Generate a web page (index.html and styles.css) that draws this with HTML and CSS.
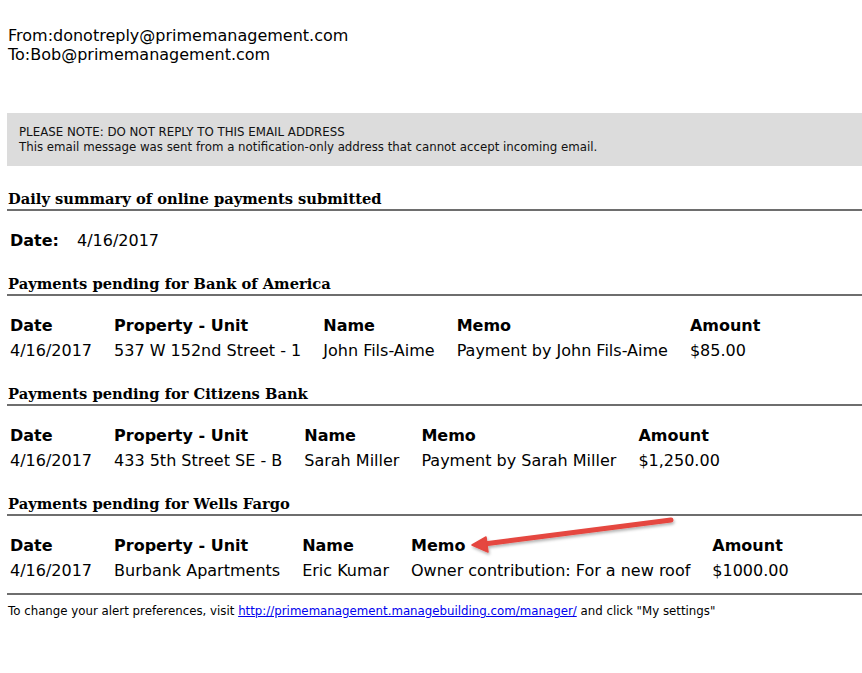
FILE: index.html
```html
<!DOCTYPE html>
<html lang="en">
<head>
    <meta charset="UTF-8">
    <title>Daily summary of online payments</title>
    <link rel="stylesheet" href="styles.css">
</head>
<body>
    <div class="mail-head">
        <div>From:donotreply@primemanagement.com</div>
        <div>To:Bob@primemanagement.com</div>
    </div>

    <div class="notice">
        <div>PLEASE NOTE: DO NOT REPLY TO THIS EMAIL ADDRESS</div>
        <div>This email message was sent from a notification-only address that cannot accept incoming email.</div>
    </div>

    <h2>Daily summary of online payments submitted</h2>
    <table class="summary">
        <tr><th>Date:</th><td>4/16/2017</td></tr>
    </table>

    <h2>Payments pending for Bank of America</h2>
    <table class="payments">
        <tr><th>Date</th><th>Property - Unit</th><th>Name</th><th>Memo</th><th>Amount</th></tr>
        <tr><td>4/16/2017</td><td>537 W 152nd Street - 1</td><td>John Fils-Aime</td><td>Payment by John Fils-Aime</td><td>$85.00</td></tr>
    </table>

    <h2>Payments pending for Citizens Bank</h2>
    <table class="payments">
        <tr><th>Date</th><th>Property - Unit</th><th>Name</th><th>Memo</th><th>Amount</th></tr>
        <tr><td>4/16/2017</td><td>433 5th Street SE - B</td><td>Sarah Miller</td><td>Payment by Sarah Miller</td><td>$1,250.00</td></tr>
    </table>

    <h2>Payments pending for Wells Fargo</h2>
    <table class="payments">
        <tr><th>Date</th><th>Property - Unit</th><th>Name</th><th>Memo</th><th>Amount</th></tr>
        <tr><td>4/16/2017</td><td>Burbank Apartments</td><td>Eric Kumar</td><td>Owner contribution: For a new roof</td><td>$1000.00</td></tr>
    </table>

    <div class="footer">
        To change your alert preferences, visit <a href="#">http://primemanagement.managebuilding.com/manager/</a> and click "My settings"
    </div>

    <svg class="arrow" width="862" height="673" viewBox="0 0 862 673">
        <defs>
            <filter id="shadow" x="-10%" y="-50%" width="120%" height="200%">
                <feDropShadow dx="1" dy="2" stdDeviation="1.5" flood-color="#000" flood-opacity="0.3"/>
            </filter>
        </defs>
        <g filter="url(#shadow)" fill="#e5463f" stroke="#e5463f">
            <line x1="671" y1="520" x2="484" y2="544" stroke-width="5" stroke-linecap="round"/>
            <polygon points="472,545 486,537 488,552" stroke-width="1.5" stroke-linejoin="round"/>
        </g>
    </svg>
</body>
</html>
```

FILE: styles.css
```css
* {
    box-sizing: border-box;
}
body {
    margin: 0;
    padding: 0 0 0 7px;
    background: #fff;
    color: #000;
    font-family: 'DejaVu Sans', Verdana, sans-serif;
    font-size: 16px;
    position: relative;
    width: 862px;
    height: 673px;
    overflow: hidden;
}
.mail-head {
    padding: 26px 0 0 1px;
    line-height: 19px;
}
.notice {
    margin-top: 49px;
    background: #dcdcdc;
    padding: 12px 12px 11px;
    font-family: 'DejaVu Sans', Tahoma, sans-serif;
    font-size: 11.8px;
    line-height: 15px;
    color: #111;
}
h2 {
    margin: 24px 0 0;
    padding: 0 0 2px 1px;
    font-family: 'DejaVu Serif', Georgia, serif;
    font-size: 14.7px;
    line-height: 17px;
    border-bottom: 2px solid #6e6e6e;
}
table {
    border-collapse: collapse;
    margin-top: 17px;
}
th, td {
    text-align: left;
    padding: 3px 19px 3px 3px;
    line-height: 19px;
    white-space: nowrap;
    vertical-align: top;
}
.summary {
    margin-top: 17px;
}
.summary th {
    padding-right: 15px;
}
.summary + h2 {
    margin-top: 22px;
}
.payments + h2 {
    margin-top: 22px;
}
.footer {
    margin-top: 10px;
    border-top: 2px solid #6e6e6e;
    padding: 9px 0 0 1px;
    font-family: 'DejaVu Sans', Tahoma, sans-serif;
    font-size: 11.8px;
    line-height: 15px;
}
.footer a {
    color: #0000ee;
}
.arrow {
    position: absolute;
    left: 0;
    top: 0;
    pointer-events: none;
}
```
